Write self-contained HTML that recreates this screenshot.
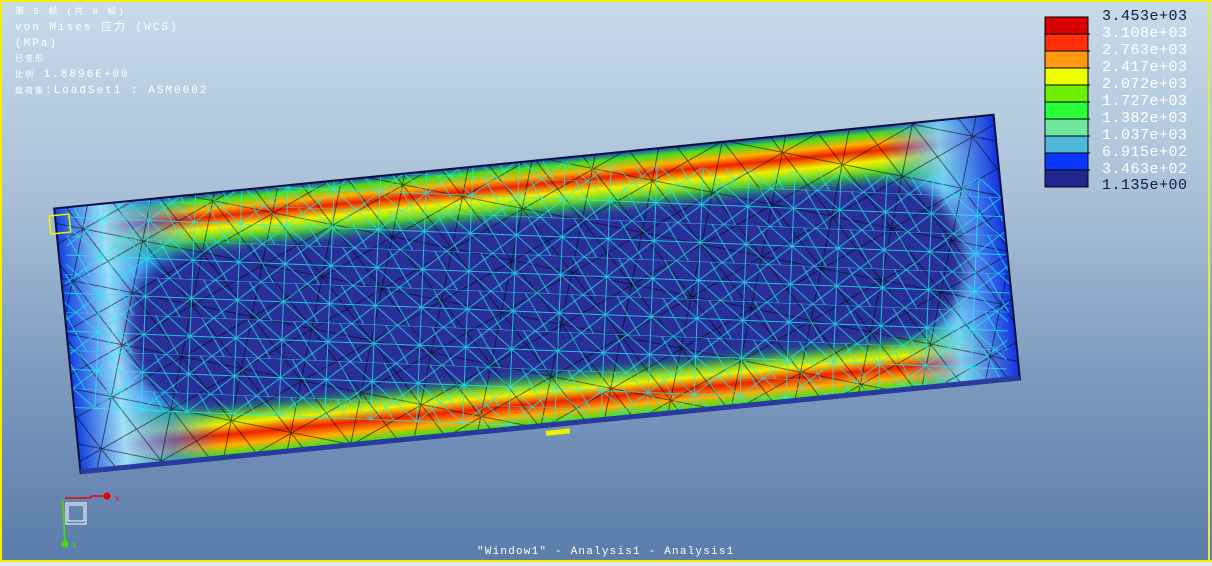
<!DOCTYPE html>
<html><head><meta charset="utf-8"><style>
html,body{margin:0;padding:0}
body{width:1212px;height:566px;overflow:hidden;position:relative;background:linear-gradient(#c7dbea 0%,#a9c0d8 35%,#7e9cc0 65%,#5d7eab 97%);font-family:"Liberation Mono","Noto Sans CJK SC",monospace}
.t{position:absolute;color:#fff;font-size:11px;letter-spacing:2px;white-space:nowrap;line-height:12px}
.lg{position:absolute;left:1102px;font-size:15px;color:#fff;letter-spacing:0.5px}
</style></head><body>
<div style="position:absolute;left:0;top:0;width:1212px;height:2px;background:#f2f000"></div>
<div style="position:absolute;left:0;top:0;width:2px;height:562px;background:#f2f000"></div>
<div style="position:absolute;left:1208px;top:0;width:2px;height:562px;background:#e8e840"></div>
<div style="position:absolute;left:0;top:560px;width:1212px;height:2px;background:#f2f000"></div>
<div style="position:absolute;left:0;top:562px;width:1212px;height:4px;background:#dde6ee"></div>
<div class="t" style="left:15px;top:6px;font-size:9px">第 5 帧 (共 8 帧)</div>
<div class="t" style="left:15px;top:22px">von Mises 应力 (WCS)</div>
<div class="t" style="left:15px;top:38px">(MPa)</div>
<div class="t" style="left:15px;top:54px;font-size:8px">已变形</div>
<div class="t" style="left:15px;top:69px"><span style="font-size:8px">比例</span>  1.8896E+00</div>
<div class="t" style="left:15px;top:85px"><span style="font-size:8px">载荷集</span>:LoadSet1 :  ASM0002</div>
<svg width="1212" height="566" style="position:absolute;left:0;top:0">
<defs>
<linearGradient id="vg" x1="0" y1="0" x2="0" y2="1">
<stop offset="0" stop-color="#1a3cd0"/><stop offset="0.025" stop-color="#40e020"/><stop offset="0.06" stop-color="#ffb000"/><stop offset="0.09" stop-color="#ee2000"/><stop offset="0.13" stop-color="#f0f000"/><stop offset="0.19" stop-color="#30e030"/><stop offset="0.25" stop-color="#30b8e0"/><stop offset="0.31" stop-color="#2a2e98"/><stop offset="0.69" stop-color="#2a2e98"/><stop offset="0.75" stop-color="#30b8e0"/><stop offset="0.81" stop-color="#30e030"/><stop offset="0.87" stop-color="#f0f000"/><stop offset="0.91" stop-color="#ee2000"/><stop offset="0.95" stop-color="#ffb000"/><stop offset="0.985" stop-color="#40e020"/><stop offset="1" stop-color="#1a2c90"/>
</linearGradient>
<linearGradient id="hg" x1="0" y1="0" x2="1" y2="0">
<stop offset="0" stop-color="#1040e0" stop-opacity="1"/><stop offset="0.05" stop-color="#a0e0ff" stop-opacity="0.95"/><stop offset="0.1" stop-color="#3080ff" stop-opacity="0.6"/><stop offset="0.15" stop-color="#3080ff" stop-opacity="0"/><stop offset="0.88" stop-color="#3080ff" stop-opacity="0"/><stop offset="0.94" stop-color="#80d0ff" stop-opacity="0.9"/><stop offset="1" stop-color="#1030e0" stop-opacity="1"/>
</linearGradient>
<filter id="bl"><feGaussianBlur stdDeviation="6"/></filter>
<pattern id="mesh" width="46" height="38" patternUnits="userSpaceOnUse">
<path d="M0 0L46 0M0 19L46 19M0 0L23 19L46 0M0 38L23 19L46 38M0 19L12 38M34 0L46 19M23 0L23 38" stroke="#20f0f0" stroke-width="1" fill="none" opacity="0.75"/>
</pattern>
<pattern id="mesh2" width="61" height="53" patternUnits="userSpaceOnUse" patternTransform="rotate(17)">
<path d="M0 0L61 53M61 0L0 53M30 0L30 53M0 26L61 26" stroke="#000" stroke-width="0.8" fill="none" opacity="0.7"/>
</pattern>
<clipPath id="cp"><rect x="-472" y="-132" width="944" height="266"/></clipPath>
</defs>
<g transform="translate(537 293) rotate(-5.7)">
<rect x="-472" y="-132" width="944" height="266" fill="url(#vg)"/>
<rect x="-472" y="-132" width="944" height="266" fill="url(#hg)"/>
<rect x="-410" y="-80" width="840" height="166" rx="80" fill="#2a2e98" filter="url(#bl)"/>
<g clip-path="url(#cp)">
<rect x="-472" y="-132" width="944" height="266" fill="url(#mesh2)"/>
<rect x="-472" y="-132" width="944" height="266" fill="url(#mesh)" transform="rotate(8)"/>
</g>
<rect x="-472" y="-132" width="944" height="266" fill="none" stroke="#101040" stroke-width="2"/>
<rect x="-472" y="130" width="944" height="5" fill="#2a3aa0"/>
<rect x="-478" y="-125" width="20" height="18" fill="none" stroke="#f0f000" stroke-width="1.5"/>
<rect x="-5" y="138" width="24" height="5" fill="#f0f000"/>
</g>
<rect x="1045" y="17" width="43" height="170" fill="#202890" stroke="#000" stroke-width="1"/>
<rect x="1045.5" y="17.5" width="42" height="17" fill="#d80000"/>
<rect x="1045.5" y="34" width="42" height="17" fill="#ff3008"/>
<rect x="1045.5" y="51" width="42" height="17" fill="#ff9a10"/>
<rect x="1045.5" y="68" width="42" height="17" fill="#f0ff00"/>
<rect x="1045.5" y="85" width="42" height="17" fill="#6ef000"/>
<rect x="1045.5" y="102" width="42" height="17" fill="#28ff38"/>
<rect x="1045.5" y="119" width="42" height="17" fill="#70e8a0"/>
<rect x="1045.5" y="136" width="42" height="17" fill="#50b8d8"/>
<rect x="1045.5" y="153" width="42" height="17" fill="#0838ff"/>
<rect x="1045.5" y="170" width="42" height="16.5" fill="#202890"/>
<path d="M1045 34H1090M1045 51H1090M1045 68H1090M1045 85H1090M1045 102H1090M1045 119H1090M1045 136H1090M1045 153H1090M1045 170H1090" stroke="#000" stroke-width="1"/>
<rect x="1045" y="17" width="43" height="170" fill="none" stroke="#000"/>
<path d="M65 498L90 498L92 496L107 496" stroke="#e00" stroke-width="1.5" fill="none"/>
<circle cx="107" cy="496" r="3.5" fill="#e00"/>
<path d="M63 500L65 544" stroke="#40e000" stroke-width="1.5"/>
<circle cx="65" cy="544" r="3.5" fill="#40e000"/>
<path d="M66 503H86V524H66Z M68 505H84V521H68Z" stroke="#fff" stroke-width="1" fill="none"/>
<text x="115" y="501" fill="#e00" font-size="8" font-family="Liberation Mono">x</text>
<text x="72" y="548" fill="#40e000" font-size="8" font-family="Liberation Mono">1</text>
</svg>
<div class="lg" style="top:8px;color:#101848">3.453e+03</div>
<div class="lg" style="top:25px">3.108e+03</div>
<div class="lg" style="top:42px">2.763e+03</div>
<div class="lg" style="top:59px">2.417e+03</div>
<div class="lg" style="top:76px">2.072e+03</div>
<div class="lg" style="top:93px">1.727e+03</div>
<div class="lg" style="top:110px">1.382e+03</div>
<div class="lg" style="top:127px">1.037e+03</div>
<div class="lg" style="top:144px">6.915e+02</div>
<div class="lg" style="top:161px">3.463e+02</div>
<div class="lg" style="top:177px;color:#101848">1.135e+00</div>
<div class="t" style="left:477px;top:546px;font-size:11px;letter-spacing:1.2px">"Window1" - Analysis1 - Analysis1</div>
</body></html>
